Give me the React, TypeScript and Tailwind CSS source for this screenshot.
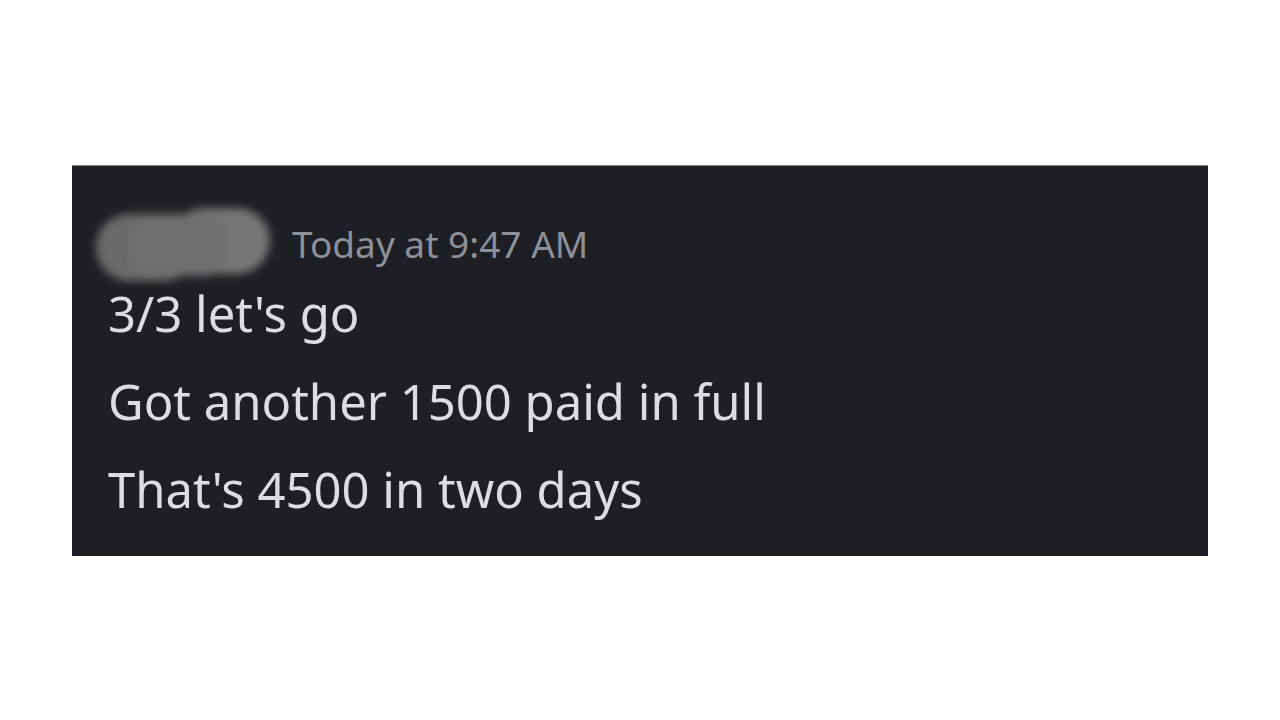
import React from "react";

const lines = ["3/3 let's go", "Got another 1500 paid in full", "That's 4500 in two days"];

// blurred-out username, drawn as two soft lumps
const BlurredName = () => (
  <svg width="200" height="110" viewBox="0 0 200 110" className="-ml-[24px] -mt-[10px] shrink-0 self-start">
    <defs>
      <filter id="soft" x="-20%" y="-40%" width="140%" height="180%">
        <feGaussianBlur stdDeviation="4.5" />
      </filter>
    </defs>
    <g filter="url(#soft)">
      <rect x="12" y="19" width="100" height="67" rx="33" fill="#6a6a6a" />
      <rect x="88" y="13" width="98" height="66" rx="33" fill="#767676" />
      <rect x="45" y="19" width="100" height="62" rx="24" fill="#707070" />
    </g>
  </svg>
);

export default function App() {
  return (
    <div className="flex h-screen w-full items-center justify-center bg-white">
      <div
        className="flex h-[391px] w-[1136px] flex-col border-t border-[#8a8a8d] bg-[#1e1f24] pl-[36px] pt-[39px]"
        style={{ fontFamily: '"Noto Sans", "Open Sans", sans-serif' }}
      >
        <div className="flex h-[64px] items-center">
          <BlurredName />
          <span className="ml-[8px] mt-[13px] text-[37px] leading-none text-[#8d8f99]">
            Today at 9:47 AM
          </span>
        </div>
        <div className="flex flex-col">
          {lines.map((l) => (
            <p key={l} className="text-[49px] leading-[88px] text-[#dcdde1]">
              {l}
            </p>
          ))}
        </div>
      </div>
    </div>
  );
}
